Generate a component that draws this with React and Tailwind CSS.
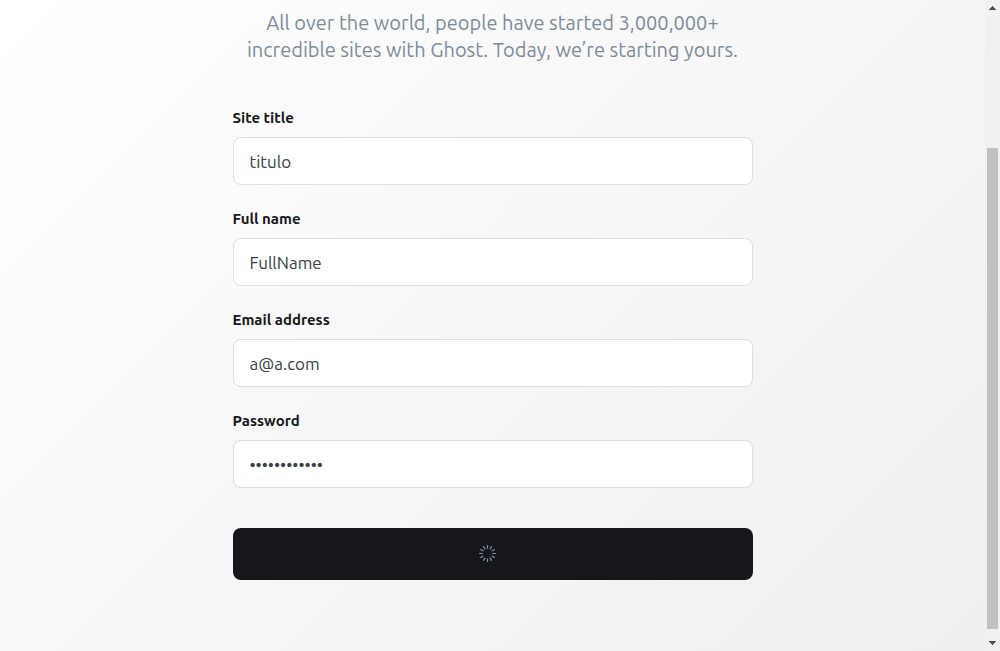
import React from "react";

const fields = [
  { id: "site-title", label: "Site title", type: "text", value: "titulo" },
  { id: "full-name", label: "Full name", type: "text", value: "FullName" },
  { id: "email", label: "Email address", type: "email", value: "a@a.com" },
  { id: "password", label: "Password", type: "password", value: "secretpass12" },
];

const spokes = [0, 30, 60, 90, 120, 150, 180, 210, 240, 270, 300, 330];

function Field({ id, label, type, value }) {
  return (
    <div className="flex flex-col gap-[9px]">
      <label htmlFor={id} className="text-[15px] leading-5 font-bold text-[#15171a]">
        {label}
      </label>
      <input
        id={id}
        type={type}
        defaultValue={value}
        className="h-12 w-full rounded-lg border border-[#dddedf] bg-white px-4 text-[17px] text-[#394047] outline-none"
      />
    </div>
  );
}

function Spinner() {
  return (
    <svg width="18" height="18" viewBox="0 0 18 18" className="mr-[10px]" aria-hidden="true">
      {spokes.map((angle) => (
        <line
          key={angle}
          x1="8.5"
          y1="0.6"
          x2="8.5"
          y2="3.2"
          stroke="#8594a3"
          strokeWidth="1.2"
          strokeLinecap="round"
          transform={`rotate(${angle} 8.5 8.5)`}
        />
      ))}
    </svg>
  );
}

function Scrollbar() {
  return (
    <div className="flex w-[15px] shrink-0 flex-col items-center bg-[#f1f1f1]" aria-hidden="true">
      <svg width="15" height="17" viewBox="0 0 15 17" shapeRendering="crispEdges">
        <path d="M7 6h1v1h1v1h1v1h1v1H4V9h1V8h1V7h1z" fill="#505050" />
      </svg>
      <div className="grow-[131]" />
      <div className="w-[11px] grow-[481] bg-[#c1c1c1]" />
      <div className="grow-[5]" />
      <svg width="15" height="17" viewBox="0 0 15 17" shapeRendering="crispEdges">
        <path d="M4 7h7v1h-1v1H9v1H8v1H7v-1H6V9H5V8H4z" fill="#505050" />
      </svg>
    </div>
  );
}

export default function App() {
  return (
    <div className="flex min-h-screen font-['Ubuntu','Noto_Sans',sans-serif]">
      <main className="flex flex-1 justify-center bg-linear-[135deg,#ffffff,#efefef] pt-[9px]">
        <div className="w-full max-w-[520px]">
          <p className="text-center text-xl leading-[27px] text-[#7c8b9a]">
            All over the world, people have started 3,000,000+
            <br />
            incredible sites with Ghost. Today, we’re starting yours.
          </p>
          <form className="mt-[45px]" onSubmit={(event) => event.preventDefault()}>
            <div className="flex flex-col gap-6">
              {fields.map((field) => (
                <Field key={field.id} {...field} />
              ))}
            </div>
            <button
              type="submit"
              aria-label="Creating account"
              className="mt-10 flex h-[52px] w-full items-center justify-center rounded-lg bg-[#15171a]"
            >
              <Spinner />
            </button>
          </form>
        </div>
      </main>
      <Scrollbar />
    </div>
  );
}
